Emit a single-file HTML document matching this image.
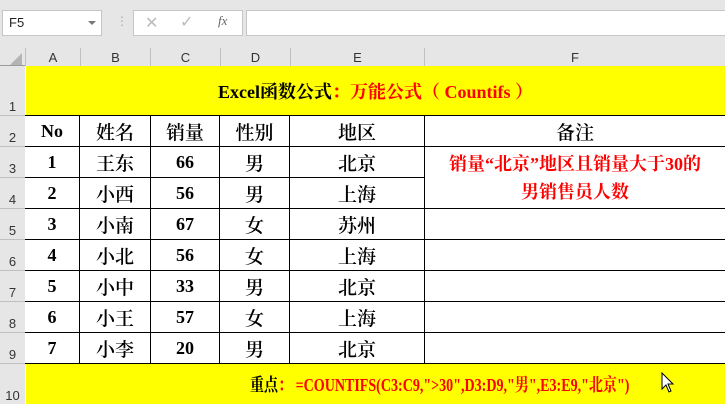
<!DOCTYPE html>
<html><head><meta charset="utf-8"><style>
*{margin:0;padding:0;box-sizing:border-box}
body{width:725px;height:404px;overflow:hidden;background:#fff;position:relative;font-family:"Liberation Serif","Noto Serif CJK SC",serif}
.a{position:absolute}
.top{left:0;top:0;width:725px;height:48px;background:#e6e6e6}
.box{background:#fff;border:1px solid #c6c6c6}
.hdr{background:#e6e6e6;font-family:"Liberation Sans",sans-serif;font-size:13px;color:#333;display:flex;align-items:flex-end;justify-content:center;padding-bottom:1px}
.c{display:flex;align-items:center;justify-content:center;font-weight:bold;font-size:18px;color:#000}
.cn{font-weight:600;font-family:"Noto Serif CJK SC",serif;font-size:19px}
.vl{width:1px;background:#000}
.hl{height:1px;background:#000}
.red{color:#f00}
</style></head><body>
<div class="a top"></div>
<div class="a box" style="left:2px;top:10px;width:100px;height:26px;font-family:'Liberation Sans',sans-serif;font-size:13px;padding:4px 0 0 6px;color:#222">F5</div>
<div class="a" style="left:88px;top:21px;width:0;height:0;border-left:4px solid transparent;border-right:4px solid transparent;border-top:4px solid #777"></div>
<div class="a" style="left:116px;top:14px;color:#aaa;font-size:12px;font-family:'Liberation Sans',sans-serif">⋮</div>
<div class="a box" style="left:133px;top:10px;width:110px;height:26px"></div>
<div class="a" style="left:145px;top:13px;color:#bbb;font-size:16px;font-family:'Liberation Sans',sans-serif">✕</div>
<div class="a" style="left:180px;top:12px;color:#bbb;font-size:16px;font-family:'DejaVu Sans',sans-serif">✓</div>
<div class="a" style="left:218px;top:13px;color:#666;font-size:13px;font-style:italic;font-family:'Liberation Serif',serif">fx</div>
<div class="a box" style="left:246px;top:10px;width:481px;height:26px"></div>
<div class="a" style="left:0;top:48px;width:725px;height:18px;background:#e6e6e6;border-bottom:1px solid #9b9b9b"></div>
<div class="a" style="left:10px;top:53px;width:0;height:0;border-left:12px solid transparent;border-bottom:12px solid #b4b4b4"></div>
<div class="a hdr" style="left:25px;top:48px;width:55px;height:18px;border-left:1px solid #c0c0c0">A</div>
<div class="a hdr" style="left:80px;top:48px;width:70px;height:18px;border-left:1px solid #c0c0c0">B</div>
<div class="a hdr" style="left:150px;top:48px;width:70px;height:18px;border-left:1px solid #c0c0c0">C</div>
<div class="a hdr" style="left:220px;top:48px;width:70px;height:18px;border-left:1px solid #c0c0c0">D</div>
<div class="a hdr" style="left:290px;top:48px;width:134px;height:18px;border-left:1px solid #c0c0c0">E</div>
<div class="a hdr" style="left:424px;top:48px;width:301px;height:18px;border-left:1px solid #c0c0c0">F</div>
<div class="a" style="left:0;top:66px;width:25px;height:338px;background:#e6e6e6;border-right:1px solid #9b9b9b"></div>
<div class="a hdr" style="left:0;top:66px;width:25px;height:50px;border-bottom:1px solid #c0c0c0">1</div>
<div class="a hdr" style="left:0;top:116px;width:25px;height:31px;border-bottom:1px solid #c0c0c0">2</div>
<div class="a hdr" style="left:0;top:147px;width:25px;height:31px;border-bottom:1px solid #c0c0c0">3</div>
<div class="a hdr" style="left:0;top:178px;width:25px;height:31px;border-bottom:1px solid #c0c0c0">4</div>
<div class="a hdr" style="left:0;top:209px;width:25px;height:31px;border-bottom:1px solid #c0c0c0">5</div>
<div class="a hdr" style="left:0;top:240px;width:25px;height:31px;border-bottom:1px solid #c0c0c0">6</div>
<div class="a hdr" style="left:0;top:271px;width:25px;height:31px;border-bottom:1px solid #c0c0c0">7</div>
<div class="a hdr" style="left:0;top:302px;width:25px;height:31px;border-bottom:1px solid #c0c0c0">8</div>
<div class="a hdr" style="left:0;top:333px;width:25px;height:31px;border-bottom:1px solid #c0c0c0">9</div>
<div class="a hdr" style="left:0;top:364px;width:25px;height:40px">10</div>
<div class="a c" style="left:26px;top:66px;width:699px;height:49px;background:#ff0;font-size:18px;padding-left:0">Excel函数公式<span class="red">：万能公式（ Countifs ）</span></div>
<div class="a" style="left:26px;top:364px;width:699px;height:40px;background:#ff0"></div>
<div class="a c" style="left:250px;top:364px;height:40px;font-size:18px;white-space:nowrap;transform:scaleX(0.78);transform-origin:0 50%">重点<span class="red">：&nbsp;=COUNTIFS(C3:C9,"&gt;30",D3:D9,"男",E3:E9,"北京")</span></div>
<svg class="a" style="left:661px;top:372px" width="14" height="22" viewBox="0 0 14 22"><path d="M1 1 L1 17 L5 13 L8 20 L10 19 L7 12 L12 12 Z" fill="#fff" stroke="#000" stroke-width="1"/></svg>
<div class="a hl" style="left:25px;top:115px;width:700px"></div>
<div class="a hl" style="left:25px;top:146px;width:700px"></div>
<div class="a hl" style="left:25px;top:177px;width:399px"></div>
<div class="a hl" style="left:25px;top:208px;width:700px"></div>
<div class="a hl" style="left:25px;top:239px;width:700px"></div>
<div class="a hl" style="left:25px;top:270px;width:700px"></div>
<div class="a hl" style="left:25px;top:301px;width:700px"></div>
<div class="a hl" style="left:25px;top:332px;width:700px"></div>
<div class="a hl" style="left:25px;top:363px;width:700px"></div>
<div class="a vl" style="left:79px;top:115px;height:248px"></div>
<div class="a vl" style="left:150px;top:115px;height:248px"></div>
<div class="a vl" style="left:219px;top:115px;height:248px"></div>
<div class="a vl" style="left:289px;top:115px;height:248px"></div>
<div class="a vl" style="left:424px;top:115px;height:248px"></div>
<div class="a c" style="left:25px;top:116px;width:54px;height:30px">No</div>
<div class="a c cn" style="left:80px;top:116px;width:70px;height:30px">姓名</div>
<div class="a c cn" style="left:151px;top:116px;width:68px;height:30px">销量</div>
<div class="a c cn" style="left:220px;top:116px;width:69px;height:30px">性别</div>
<div class="a c cn" style="left:290px;top:116px;width:134px;height:30px">地区</div>
<div class="a c cn" style="left:425px;top:116px;width:300px;height:30px">备注</div>
<div class="a c red" style="left:425px;top:147px;width:300px;height:61px;flex-direction:column;font-size:18px;line-height:28px;font-family:'Liberation Serif','Noto Serif CJK SC',serif;white-space:nowrap"><div>销量“北京”地区且销量大于30的</div><div>男销售员人数</div></div>
<div id="d"></div>
<script>
var rows=[["1","王东","66","男","北京"],["2","小西","56","男","上海"],["3","小南","67","女","苏州"],["4","小北","56","女","上海"],["5","小中","33","男","北京"],["6","小王","57","女","上海"],["7","小李","20","男","北京"]];
var cols=[[25,54],[80,70],[151,68],[220,69],[290,134]];var h="";
rows.forEach(function(r,i){var t=147+i*31;r.forEach(function(v,j){h+='<div class="a c'+(j==1||j==3||j==4?' cn':'')+'" style="left:'+cols[j][0]+'px;top:'+t+'px;width:'+cols[j][1]+'px;height:30px">'+v+'</div>';});});
document.getElementById("d").innerHTML=h;
</script>
</body></html>
